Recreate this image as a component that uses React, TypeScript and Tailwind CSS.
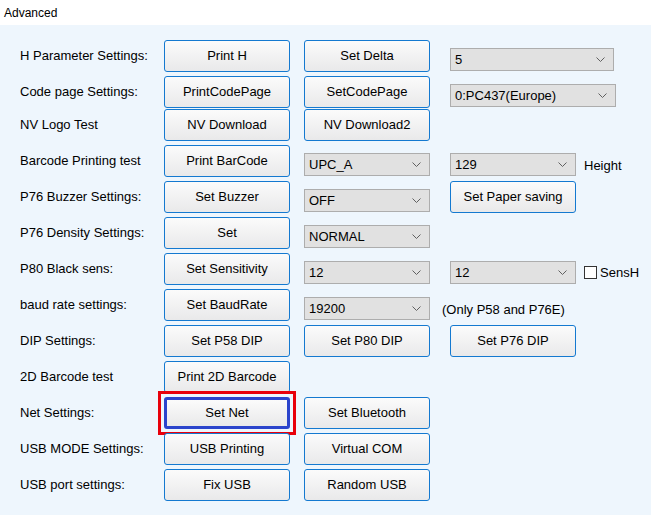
import React from 'react'

function Btn({ label, active }: { label: string; active?: boolean }) {
    if (active) {
        // focused button with the red highlight frame round it
        return (
            <div className="-m-[6px] border-[3px] border-[#e8000b] p-[3px]">
                <div className="h-[32px] w-[126px] flex items-center justify-center rounded-[3px] border-[3px] border-[#2b44cc] bg-linear-to-b from-[#fbfbfb] to-[#e9e9ea]">
                    {label}
                </div>
            </div>
        )
    }
    return (
        <div className="h-[32px] w-[126px] flex items-center justify-center rounded-[3px] border border-[#1479d0] bg-linear-to-b from-[#fbfbfb] to-[#e9e9ea]">
            {label}
        </div>
    )
}

function Drop({ value, w }: { value: string; w: string }) {
    return (
        <div className={`${w} shrink-0 h-[23px] mt-[7px] flex items-center justify-between pl-[4px] pr-[8px] border border-[#adadad] bg-[#e1e1e1]`}>
            <span>{value}</span>
            <svg width="9" height="5" viewBox="0 0 9 5">
                <polyline points="0.5,0.5 4.5,4.5 8.5,0.5" fill="none" stroke="#606060" strokeWidth="1" />
            </svg>
        </div>
    )
}

function Row({ label, c1, c2, c3, extra, className }: any) {
    return (
        <div className={`h-[36px] flex items-center pl-[20px] ${className || ''}`}>
            <div className="w-[144px] shrink-0">{label}</div>
            <div className="w-[140px] shrink-0 flex">{c1}</div>
            <div className="w-[146px] shrink-0 flex">{c2}</div>
            {c3}
            {extra}
        </div>
    )
}

export default function App() {
    return (
        <div className="w-[651px] h-[515px] bg-[#eef6fd] font-['Liberation_Sans',Arial,sans-serif] text-[13px] text-black overflow-hidden">
            <div className="h-[25px] bg-white pl-[4px] flex items-center text-[12px]">Advanced</div>

            <div className="pt-[13px] flex flex-col">
                <Row label="H Parameter Settings:" c1={<Btn label="Print H" />} c2={<Btn label="Set Delta" />}
                    c3={<Drop value="5" w="w-[164px]" />} />
                <Row label="Code page Settings:" c1={<Btn label="PrintCodePage" />} c2={<Btn label="SetCodePage" />}
                    c3={<Drop value="0:PC437(Europe)" w="w-[166px]" />} />
                <Row className="-mt-[3px]" label="NV Logo Test" c1={<Btn label="NV Download" />} c2={<Btn label="NV Download2" />} />
                <Row label="Barcode Printing test" c1={<Btn label="Print BarCode" />} c2={<Drop value="UPC_A" w="w-[126px]" />}
                    c3={<Drop value="129" w="w-[126px]" />}
                    extra={<span className="ml-[8px] mt-[10px]">Height</span>} />
                <Row label="P76 Buzzer Settings:" c1={<Btn label="Set Buzzer" />} c2={<Drop value="OFF" w="w-[126px]" />}
                    c3={<Btn label="Set Paper saving" />} />
                <Row label="P76 Density Settings:" c1={<Btn label="Set" />} c2={<Drop value="NORMAL" w="w-[126px]" />} />
                <Row label="P80 Black sens:" c1={<Btn label="Set Sensitivity" />} c2={<Drop value="12" w="w-[126px]" />}
                    c3={<Drop value="12" w="w-[126px]" />}
                    extra={
                        <div className="ml-[8px] mt-[7px] flex items-center">
                            <div className="w-[13px] h-[13px] border border-[#333] bg-white" />
                            <span className="ml-[3px]">SensH</span>
                        </div>
                    } />
                <Row label="baud rate settings:" c1={<Btn label="Set BaudRate" />} c2={<Drop value="19200" w="w-[126px]" />}
                    c3={<span className="-ml-[8px] mt-[10px] whitespace-nowrap">(Only P58 and P76E)</span>} />
                <Row label="DIP Settings:" c1={<Btn label="Set P58 DIP" />} c2={<Btn label="Set P80 DIP" />}
                    c3={<Btn label="Set P76 DIP" />} />
                <Row label="2D Barcode test" c1={<Btn label="Print 2D Barcode" />} />
                <Row label="Net Settings:" c1={<Btn label="Set Net" active />} c2={<Btn label="Set Bluetooth" />} />
                <Row label="USB MODE Settings:" c1={<Btn label="USB Printing" />} c2={<Btn label="Virtual COM" />} />
                <Row label="USB port settings:" c1={<Btn label="Fix USB" />} c2={<Btn label="Random USB" />} />
            </div>
        </div>
    )
}
